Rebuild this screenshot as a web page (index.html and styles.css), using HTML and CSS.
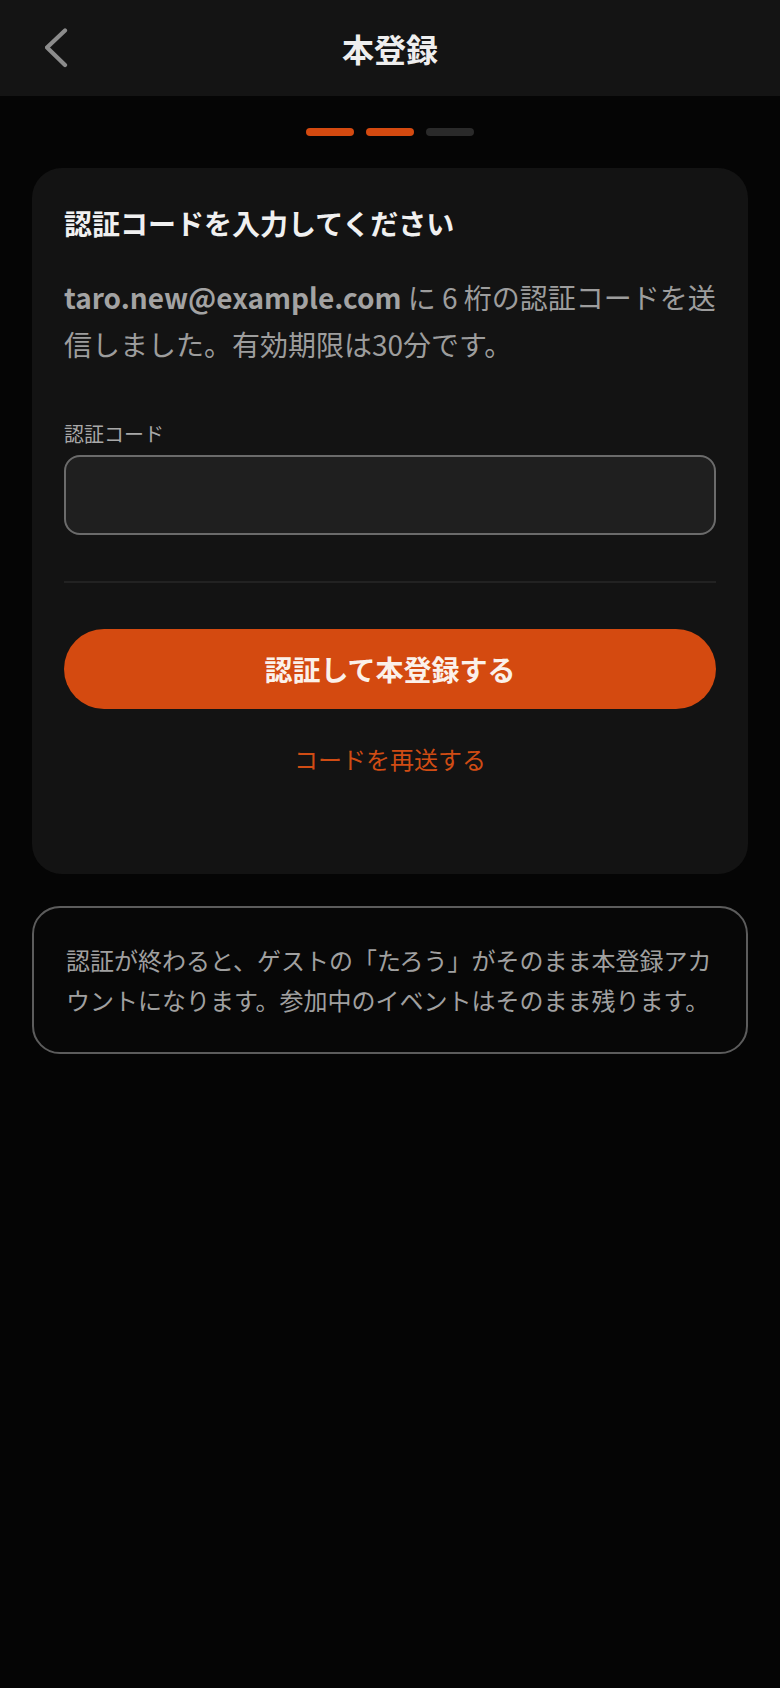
FILE: index.html
```html
<!DOCTYPE html>
<html lang="ja">
<head>
<meta charset="utf-8">
<title>本登録</title>
<link rel="stylesheet" href="styles.css">
</head>
<body>
<header class="topbar">
  <button class="back" aria-label="戻る">
    <svg width="30" height="44" viewBox="0 0 30 44"><path d="M20 2.5 L2 19.5 L20 37" fill="none" stroke="#8c8c8c" stroke-width="4.2" stroke-linecap="round" stroke-linejoin="round"/></svg>
  </button>
  <h1 class="title">本登録</h1>
</header>
<main class="main">
  <div class="steps">
    <span class="step on"></span>
    <span class="step on"></span>
    <span class="step"></span>
  </div>
  <section class="card">
    <h2 class="card-title">認証コードを入力してください</h2>
    <p class="desc"><b class="email">taro.new@example.com</b> に 6 桁の認証コードを送信しました。有効期限は30分です。</p>
    <label class="label" for="code">認証コード</label>
    <input class="input" id="code" type="text" inputmode="numeric">
    <hr class="divider">
    <button class="primary">認証して本登録する</button>
    <a class="resend" href="#">コードを再送する</a>
  </section>
  <section class="note">
    <p>認証が終わると、ゲストの「たろう」がそのまま本登録アカウントになります。参加中のイベントはそのまま残ります。</p>
  </section>
</main>
</body>
</html>
```
FILE: styles.css
```css
* { box-sizing: border-box; }
html, body { margin: 0; padding: 0; }
body {
  background: #050505;
  font-family: "Noto Sans CJK JP", "Noto Sans", sans-serif;
  color: #9d9d9d;
  min-height: 1688px;
}
.topbar {
  height: 96px;
  background: #141414;
  display: flex;
  align-items: center;
  justify-content: center;
  position: relative;
}
.back {
  position: absolute;
  left: 45px;
  top: 28px;
  width: 30px;
  height: 44px;
  padding: 0;
  border: 0;
  background: none;
  display: flex;
}
.title {
  margin: 0;
  font-size: 32px;
  font-weight: 700;
  color: #eeeeee;
  line-height: 40px;
}
.main {
  padding: 32px 32px 0;
  display: flex;
  flex-direction: column;
}
.steps {
  display: flex;
  justify-content: center;
  gap: 12px;
}
.step {
  width: 48px;
  height: 8px;
  border-radius: 4px;
  background: #2a2a2a;
}
.step.on { background: #d44a10; }
.card {
  margin-top: 32px;
  background: #131313;
  border-radius: 30px;
  padding: 32px 32px 95px;
  display: flex;
  flex-direction: column;
}
.card-title {
  margin: 0;
  font-size: 28px;
  font-weight: 700;
  color: #f0f0f0;
  line-height: 46px;
}
.desc {
  margin: 28px 0 0;
  font-size: 28px;
  line-height: 46.5px;
  color: #9d9d9d;
}
.email { font-weight: 700; color: #a3a3a3; line-height: 1; }
.label {
  margin-top: 51px;
  font-size: 20px;
  line-height: 32px;
  color: #a8a8a8;
}
.input {
  margin-top: 5px;
  height: 80px;
  width: 100%;
  border: 2px solid #6b6b6b;
  border-radius: 16px;
  background: #1f1f1f;
  color: #eee;
  font: inherit;
  font-size: 28px;
  padding: 0 20px;
  outline: none;
}
.divider {
  margin: 46px 0 0;
  border: 0;
  height: 2px;
  background: #222222;
}
.primary {
  margin-top: 46px;
  height: 80px;
  border: 0;
  border-radius: 40px;
  background: #d44a10;
  color: #fbf1ea;
  font-family: inherit;
  font-size: 28px;
  font-weight: 700;
}
.resend {
  margin-top: 30px;
  align-self: center;
  font-size: 24px;
  line-height: 40px;
  color: #d04c14;
  text-decoration: none;
}
.note {
  margin-top: 32px;
  border: 2px solid #5c5c5c;
  border-radius: 28px;
  padding: 32px;
  background: #070707;
}
.note p {
  margin: 0;
  font-size: 24px;
  line-height: 40px;
  color: #a0a0a0;
}
```
